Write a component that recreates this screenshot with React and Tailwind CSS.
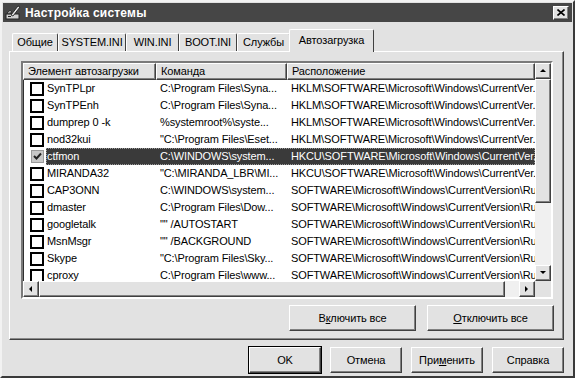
import React from 'react';

const HKLM = 'HKLM\\SOFTWARE\\Microsoft\\Windows\\CurrentVer...';
const HKCU = 'HKCU\\SOFTWARE\\Microsoft\\Windows\\CurrentVer...';
const SW = 'SOFTWARE\\Microsoft\\Windows\\CurrentVersion\\Run';

const rows = [
  { name: 'SynTPLpr', cmd: 'C:\\Program Files\\Syna...', loc: HKLM },
  { name: 'SynTPEnh', cmd: 'C:\\Program Files\\Syna...', loc: HKLM },
  { name: 'dumprep 0 -k', cmd: '%systemroot%\\syste...', loc: HKLM },
  { name: 'nod32kui', cmd: '"C:\\Program Files\\Eset...', loc: HKLM },
  { name: 'ctfmon', cmd: 'C:\\WINDOWS\\system...', loc: HKCU, checked: true, selected: true },
  { name: 'MIRANDA32', cmd: '"C:\\MIRANDA_LBR\\MI...', loc: HKCU },
  { name: 'CAP3ONN', cmd: 'C:\\WINDOWS\\system...', loc: SW },
  { name: 'dmaster', cmd: 'C:\\Program Files\\Dow...', loc: SW },
  { name: 'googletalk', cmd: '"" /AUTOSTART', loc: SW },
  { name: 'MsnMsgr', cmd: '"" /BACKGROUND', loc: SW },
  { name: 'Skype', cmd: '"C:\\Program Files\\Sky...', loc: SW },
  { name: 'cproxy', cmd: 'C:\\Program Files\\www...', loc: SW },
];

const tabs = [
  { label: 'Общие', w: 'w-[46px]' },
  { label: 'SYSTEM.INI', w: 'w-[68px]' },
  { label: 'WIN.INI', w: 'w-[53px]' },
  { label: 'BOOT.INI', w: 'w-[58px]' },
  { label: 'Службы', w: 'w-[53px]' },
];

const raised =
  'border border-t-white border-l-white border-r-[#404040] border-b-[#404040] shadow-[inset_-1px_-1px_0_#808080]';

const Arrow = ({ dir }) => {
  const pts = {
    up: '1,5 4,2 7,5',
    down: '1,2 4,5 7,2',
    left: '5,1 2,4 5,7',
    right: '2,1 5,4 2,7',
  }[dir];
  return (
    <svg width="8" height="8" viewBox="0 0 8 8">
      <polygon points={pts} fill="#000" />
    </svg>
  );
};

const ScrollBtn = ({ dir }) => (
  <div className={`w-[16px] h-[16px] shrink-0 bg-[#e2e2e2] flex items-center justify-center ${raised}`}>
    <Arrow dir={dir} />
  </div>
);

const Check = ({ checked }) =>
  checked ? (
    <div className="w-[13px] h-[13px] border border-[#9a9a9a] bg-[#c8c8c8] flex items-center justify-center">
      <svg width="9" height="9" viewBox="0 0 9 9">
        <path d="M1 4 L3.5 6.5 L8 1.5" stroke="#222" strokeWidth="2" fill="none" />
      </svg>
    </div>
  ) : (
    <div className="w-[14px] h-[14px] border-2 border-black bg-white" />
  );

const Btn = ({ className = '', children }) => (
  <button className={`h-[26px] bg-[#e2e2e2] flex items-center justify-center text-[11px] font-normal ${raised} ${className}`}>
    {children}
  </button>
);

export default function App() {
  return (
    <div className="w-[575px] h-[378px] overflow-hidden bg-[#e2e2e2] text-black font-['Liberation_Sans',Arial,sans-serif] text-[11px] tracking-[-0.12px] border-2 border-t-[#f2f2f2] border-l-[#f2f2f2] border-r-[#3a3a3a] border-b-[#3a3a3a] flex flex-col">
      {/* title bar */}
      <div className="h-[19px] mx-px mt-px bg-[#464646] flex items-center pl-[2px] pr-[3px]">
        <svg width="17" height="16" viewBox="0 0 17 16" className="shrink-0">
          <rect x="1" y="9" width="13" height="5" fill="#cfcfcf" stroke="#222" />
          <rect x="3" y="11" width="3" height="1" fill="#222" />
          <path d="M6 10 L13 1 L15 2 L8 11 Z" fill="#e8e8e8" stroke="#111" strokeWidth="0.8" />
          <path d="M2 8 L5 5 L7 7 L4 9 Z" fill="#999" stroke="#111" strokeWidth="0.6" />
        </svg>
        <span className="ml-[3px] text-white font-bold text-[12px] tracking-[0.2px]">
          Настройка системы
        </span>
        <div className={`ml-auto w-[16px] h-[14px] bg-[#e2e2e2] flex items-center justify-center ${raised}`}>
          <svg width="8" height="7" viewBox="0 0 8 7">
            <path d="M0.5 0.5 L7.5 6.5 M7.5 0.5 L0.5 6.5" stroke="#000" strokeWidth="1.6" />
          </svg>
        </div>
      </div>

      {/* tabs */}
      <div className="mt-[7px] ml-[10px] flex items-end h-[23px] -mb-px relative z-10">
        {tabs.map((t) => (
          <div
            key={t.label}
            className={`${t.w} h-[18px] mb-px bg-[#e2e2e2] border-t border-l border-t-white border-l-white border-r border-r-[#404040] rounded-t-[2px] flex items-center justify-center`}
          >
            {t.label}
          </div>
        ))}
        <div className="w-[85px] h-[23px] -ml-[1px] bg-[#e2e2e2] border-t border-l border-t-white border-l-white border-r border-r-[#404040] rounded-t-[2px] flex items-center justify-center pb-[2px]">
          Автозагрузка
        </div>
      </div>

      {/* panel */}
      <div className="ml-[7px] w-[555px] h-[289px] border border-t-white border-l-white border-r-[#404040] border-b-[#404040] shadow-[inset_-1px_-1px_0_#8a8a8a] pl-[11px] pt-[9px]">
        {/* list */}
        <div className="w-[532px] h-[238px] border-2 border-t-[#7a7a7a] border-l-[#7a7a7a] border-r-white border-b-white shadow-[inset_1px_1px_0_#303030] bg-white flex flex-col">
          <div className="flex h-[218px]">
            <div className="w-[512px] overflow-hidden">
              {/* header */}
              <div className="flex h-[17px] bg-[#e2e2e2]">
                <div className={`w-[133px] pl-[4px] flex items-center ${raised}`}>Элемент автозагрузки</div>
                <div className={`w-[131px] pl-[4px] flex items-center ${raised}`}>Команда</div>
                <div className={`w-[248px] pl-[4px] flex items-center ${raised}`}>Расположение</div>
              </div>
              {rows.map((r) => (
                <div key={r.name} className="flex h-[17px] items-center">
                  <div className="w-[23px] flex justify-end pr-[2px] shrink-0">
                    <Check checked={r.checked} />
                  </div>
                  <div
                    className={`flex h-full items-center ${
                      r.selected ? 'bg-[#3a3a3a] text-white outline outline-1 outline-dotted outline-[#9a9a9a] -outline-offset-1' : ''
                    }`}
                  >
                    <div className="w-[110px] pl-[1px] whitespace-nowrap overflow-hidden">{r.name}</div>
                    <div className="w-[131px] pl-[4px] whitespace-nowrap overflow-hidden">{r.cmd}</div>
                    <div className="w-[248px] pl-[4px] whitespace-nowrap overflow-hidden">{r.loc}</div>
                  </div>
                </div>
              ))}
            </div>
            {/* vertical scrollbar */}
            <div className="w-[16px] flex flex-col bg-[#f0f0f0]">
              <ScrollBtn dir="up" />
              <div className={`h-[124px] bg-[#e2e2e2] ${raised}`} />
              <div className="flex-1" />
              <ScrollBtn dir="down" />
            </div>
          </div>
          {/* horizontal scrollbar */}
          <div className="flex h-[16px] bg-[#f0f0f0]">
            <ScrollBtn dir="left" />
            <div className={`w-[466px] bg-[#e2e2e2] ${raised}`} />
            <div className="flex-1" />
            <ScrollBtn dir="right" />
            <div className="w-[16px] bg-[#e2e2e2]" />
          </div>
        </div>

        <div className="w-[533px] flex justify-end gap-[11px] mt-[6px]">
          <Btn className="w-[127px]">
            В<span className="underline">к</span>лючить все
          </Btn>
          <Btn className="w-[127px]">
            <span className="underline">О</span>тключить все
          </Btn>
        </div>
      </div>

      {/* dialog buttons */}
      <div className="flex gap-[9px] mt-[7px] ml-[247px]">
        <Btn className="w-[72px] outline outline-1 outline-black">OK</Btn>
        <Btn className="w-[72px]">Отмена</Btn>
        <Btn className="w-[72px]">
          При<span className="underline">м</span>енить
        </Btn>
        <Btn className="w-[72px]">Справка</Btn>
      </div>
    </div>
  );
}
